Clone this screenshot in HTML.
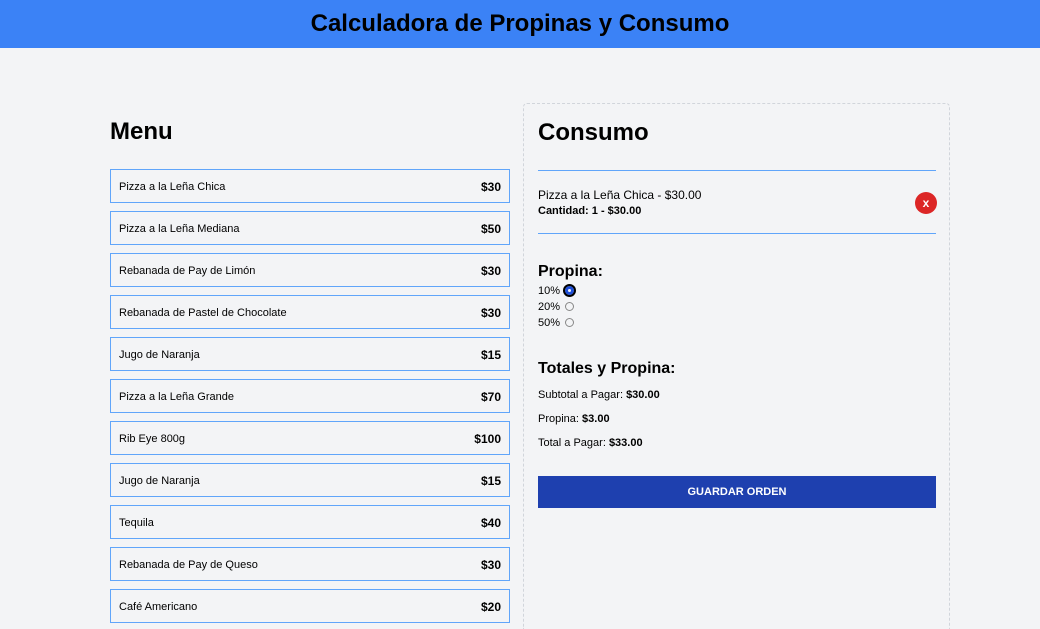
<!DOCTYPE html>
<html><head><meta charset="utf-8"><style>
*{box-sizing:border-box;margin:0;padding:0}
html,body{width:1040px;height:629px;overflow:hidden}
body{background:#f3f4f6;font-family:"Liberation Sans",sans-serif;color:#000;position:relative}
header{height:48px;background:#3b82f6;text-align:center;font-weight:900;font-size:24px;line-height:48px}
.menu{position:absolute;left:110px;top:104px;width:400px}
h2{font-size:24px;font-weight:900;height:28px;line-height:28px;margin-top:14px}
.item{position:absolute;left:0;width:400px;height:34px;border:1px solid #60a5fa;display:flex;justify-content:space-between;align-items:center;padding:1px 8px 0;font-size:11px}
.item b{font-size:12px}
.panel{position:absolute;left:523px;top:103px;width:427px;height:526px;border:1px dashed #d1d5db;border-bottom:0;border-radius:4px 4px 0 0}
.hr{position:absolute;left:14px;width:398px;height:1px;background:#60a5fa}
.abs{position:absolute;left:14px}
.x{position:absolute;left:391px;top:88px;width:22px;height:22px;border-radius:50%;background:#dc2626;color:#fff;font-weight:bold;font-size:12px;text-align:center;line-height:22px}
.r{display:inline-block;width:9px;height:9px;border:1px solid #888;border-radius:50%;vertical-align:-1px;margin-left:2px}
.btn{position:absolute;left:14px;top:372px;width:398px;height:32px;background:#1e40af;color:#fff;font-weight:bold;font-size:11px;text-align:center;line-height:32px}
</style></head><body>
<header>Calculadora de Propinas y Consumo</header>
<div class="menu">
<h2 style="position:absolute;top:0">Menu</h2>
<div class="item" style="top:65px"><span>Pizza a la Leña Chica</span><b>$30</b></div>
<div class="item" style="top:107px"><span>Pizza a la Leña Mediana</span><b>$50</b></div>
<div class="item" style="top:149px"><span>Rebanada de Pay de Limón</span><b>$30</b></div>
<div class="item" style="top:191px"><span>Rebanada de Pastel de Chocolate</span><b>$30</b></div>
<div class="item" style="top:233px"><span>Jugo de Naranja</span><b>$15</b></div>
<div class="item" style="top:275px"><span>Pizza a la Leña Grande</span><b>$70</b></div>
<div class="item" style="top:317px"><span>Rib Eye 800g</span><b>$100</b></div>
<div class="item" style="top:359px"><span>Jugo de Naranja</span><b>$15</b></div>
<div class="item" style="top:401px"><span>Tequila</span><b>$40</b></div>
<div class="item" style="top:443px"><span>Rebanada de Pay de Queso</span><b>$30</b></div>
<div class="item" style="top:485px"><span>Café Americano</span><b>$20</b></div>
</div>
<div class="panel">
<h2 class="abs" style="top:1px">Consumo</h2>
<div class="hr" style="top:66px"></div>
<div class="abs" style="top:84px;font-size:12px">Pizza a la Leña Chica - $30.00</div>
<div class="abs" style="top:101px;font-size:11px;font-weight:bold">Cantidad: 1 - $30.00</div>
<div class="x">x</div>
<div class="hr" style="top:129px"></div>
<div class="abs" style="top:159px;font-size:16px;font-weight:bold">Propina:</div>
<div class="abs" style="top:179px;font-size:11px;line-height:16px">10% <span class="r" style="border:3px solid #1d4ed8;outline:2px solid #000;outline-offset:0"></span><br>20% <span class="r"></span><br>50% <span class="r"></span></div>
<div class="abs" style="top:256px;font-size:16px;font-weight:bold">Totales y Propina:</div>
<div class="abs" style="top:285px;font-size:11px">Subtotal a Pagar: <b>$30.00</b></div>
<div class="abs" style="top:309px;font-size:11px">Propina: <b>$3.00</b></div>
<div class="abs" style="top:333px;font-size:11px">Total a Pagar: <b>$33.00</b></div>
<div class="btn">GUARDAR ORDEN</div>
</div>
</body></html>
